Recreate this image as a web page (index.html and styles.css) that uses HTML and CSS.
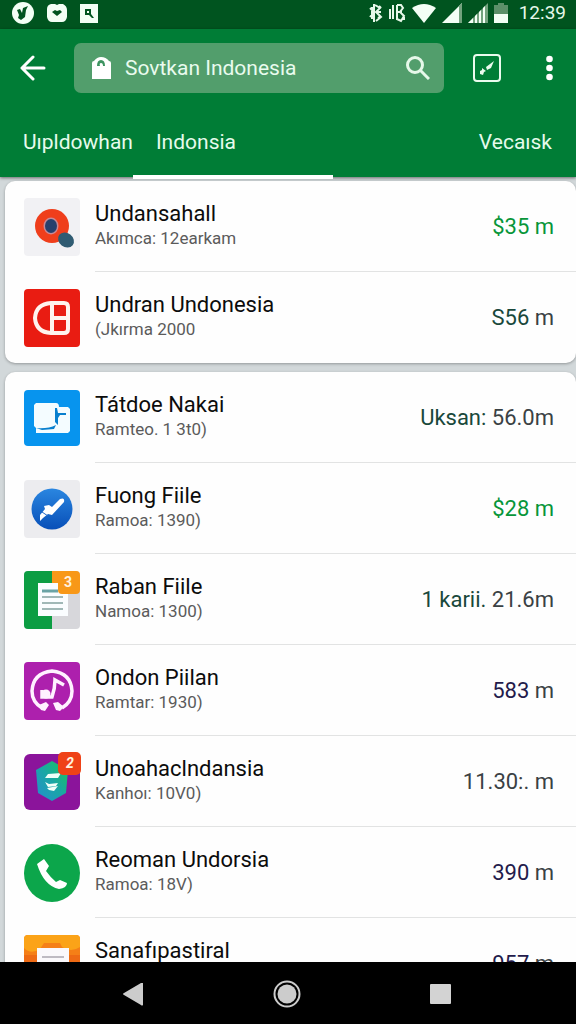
FILE: index.html
```html
<!DOCTYPE html>
<html lang="id">
<head>
  <meta charset="UTF-8" />
  <meta name="viewport" content="width=device-width, initial-scale=1.0"/>
  <title>Indonesia</title>
  <link rel="stylesheet" href="styles.css">
</head>
<body>
  <div class="status-bar">
    <div class="status-left">
      <svg width="22" height="22" viewBox="0 0 22 22"><circle cx="11" cy="11" r="11" fill="#f3fff5"/><path d="M5 8l3-1 2 4 1-5 5-2-2 4-1 7-4 3-3-2 1-3z" fill="#00541f"/></svg>
      <svg width="20" height="20" viewBox="0 0 20 20"><path d="M4 1h4l2 1 2-1h4q4 2 4 6v7q-1 5-5 5H5q-4 0-5-5V6q0-4 4-5z" fill="#f3fff5"/><path d="M5 9l3-2 2 1 3-1 2 2-5 4z" fill="#00541f"/></svg>
      <svg width="18" height="20" viewBox="0 0 18 20"><path d="M0 1h18v19H0z" fill="#f3fff5"/><path d="M5 6h6v5l3 4h-2l-3-3H5z" fill="#00541f"/><path d="M7 8h2v2H7z" fill="#f3fff5"/></svg>
    </div>
    <div class="status-right">
      <svg width="14" height="20" viewBox="0 0 14 20" fill="none" stroke="#e6f8e9" stroke-width="2"><path d="M5 1v18M1 5l4 4-4 5M6 2l5 3-4 4 5 5-5 4M3 4v12M8 9h4M10 3l2 2M9 15l3-2"/></svg>
      <svg width="17" height="20" viewBox="0 0 17 20" fill="none" stroke="#e6f8e9" stroke-width="2"><path d="M1 6v10M4 2v14M8 2v15M8 2h4l2 3-3 4 4 4-3 5-4-2M9 9h4M15 14v3"/></svg>
      <svg width="24" height="20" viewBox="0 0 24 20"><path d="M12 20L0 5q12-8 24 0z" fill="#f3fff5"/></svg>
      <svg width="20" height="20" viewBox="0 0 20 20"><path d="M20 0v20H0z" fill="#f3fff5"/><path d="M17 3l3-3v20h-3z" fill="#73a37e"/></svg>
      <svg width="20" height="20" viewBox="0 0 20 20"><path d="M20 0v20H0z" fill="#73a37e"/><path d="M5 15v5H0zM9 11v9H7v-7zM13 7v13h-2V9zM17 3v17h-2V5z" fill="#f3fff5"/></svg>
      <svg width="14" height="20" viewBox="0 0 14 20"><path d="M4 0h6v2h4v9H0V2h4z" fill="#5c9069"/><path d="M0 11h14v9H0z" fill="#f3fff5"/></svg>
      <span class="clock">12:39</span>
    </div>
  </div>

  <header class="header">
    <div class="toolbar">
      <button class="icon-btn back" aria-label="Back">
        <svg width="26" height="26" viewBox="0 0 26 26" fill="none" stroke="#fff" stroke-width="3" stroke-linecap="round" stroke-linejoin="round"><path d="M13 2L2 13l11 11M2 13h22"/></svg>
      </button>
      <div class="search">
        <label for="search" aria-label="Search">
          <svg width="19" height="22" viewBox="0 0 19 22"><path d="M0 6q0-2 2-2 3-4 7-4 5 0 8 4 2 0 2 2v16H0z" fill="#fff"/><path d="M5 9q0-6 4-6t4 6h-2q0-3-2-3T8 9z" fill="#3d9360"/></svg>
        </label>
        <input type="text" id="search" value="Sovtkan Indonesia">
        <button class="icon-btn" aria-label="Search">
          <svg width="24" height="24" viewBox="0 0 24 24" fill="none" stroke="#e6f8e9" stroke-width="3"><circle cx="9" cy="9" r="7.500"/><path d="M14 14l9 9"/></svg>
        </button>
      </div>
      <button class="icon-btn edit" aria-label="Edit">
        <svg width="28" height="28" viewBox="0 0 28 28"><rect x="1" y="1" width="26" height="26" rx="3" fill="none" stroke="#eafbee" stroke-width="2"/><path d="M21 7l-3 7-4 2-1-3zM9 14l4 3-2 1-1 3-3-1v-3l2-1z" fill="#eafbee"/></svg>
      </button>
      <button class="icon-btn more" aria-label="More">
        <svg width="7" height="26" viewBox="0 0 7 26" fill="#fff"><circle cx="3.500" cy="4" r="3.300"/><circle cx="3.500" cy="13" r="3.300"/><circle cx="3.500" cy="22" r="3.300"/></svg>
      </button>
    </div>
    <nav class="tabs">
      <a href="#" class="tab">Uıpldowhan</a>
      <a href="#" class="tab active">Indonsia</a>
      <a href="#" class="tab last">Vecaısk</a>
    </nav>
  </header>

  <main class="content">
    <ul class="card">
      <li class="row">
        <svg class="app-icon" viewBox="0 0 56 58"><rect width="56" height="58" rx="4" fill="#f1f1f4"/><circle cx="28" cy="28" r="17" fill="#ef3e1b"/><ellipse cx="27" cy="28" rx="7.500" ry="8.500" fill="#c98a96"/><ellipse cx="27" cy="28" rx="6" ry="7" fill="#27406c"/><ellipse cx="42" cy="42" rx="8.500" ry="7" transform="rotate(38 42 42)" fill="#2f5b72"/></svg>
        <div class="info"><h2>Undansahall</h2><p>Akımca: 12earkam</p></div>
        <span class="amount green">$35 m</span>
      </li>
      <li class="row">
        <svg class="app-icon" viewBox="0 0 56 58"><rect width="56" height="58" rx="4" fill="#e91c12"/><path d="M27 14h13q4 0 4 4v22q0 4-4 4H27q-15-1-16-15 1-14 16-15zM28 14v30M28 29h16" fill="none" stroke="#fff3ee" stroke-width="4"/></svg>
        <div class="info"><h2>Undran Undonesia</h2><p>(Jkırma 2000</p></div>
        <span class="amount"><span class="dark-green">S56</span> m</span>
      </li>
    </ul>

    <ul class="card">
      <li class="row">
        <svg class="app-icon" viewBox="0 0 56 58"><rect y="1" width="56" height="56" rx="4" fill="#0794ee"/><path d="M10 16l2-2h20q3 0 3 4h9l2 2v22l-2 2H12V39l-2-2z" fill="#f4fcff"/><path d="M31 19h2l1 5h8v2h-6l-2 3v7l-3-3zM12 39q12 1 20-3l-2 4-12 1z" fill="#087fce"/></svg>
        <div class="info"><h2>Tátdoe Nakai</h2><p>Ramteo. 1 3t0)</p></div>
        <span class="amount"><span class="dark-green">Uksan:</span> 56.0m</span>
      </li>
      <li class="row">
        <svg class="app-icon" viewBox="0 0 56 58"><defs><linearGradient id="blue" x2="0" y2="1"><stop stop-color="#2a86e0"/><stop offset="1" stop-color="#084fb8"/></linearGradient></defs><rect width="56" height="58" rx="4" fill="#ececef"/><circle cx="28" cy="29" r="20.500" fill="url(#blue)"/><path d="M16 35l5-6-1-3 5-1 3 2 8-8q5-2 4 3L28 35l-4-1-5 4-3 3z" fill="#fff"/><path d="M18 32l6 4" stroke="#2269c8" stroke-width="1"/></svg>
        <div class="info"><h2>Fuong Fiile</h2><p>Ramoa: 1390)</p></div>
        <span class="amount green">$28 m</span>
      </li>
      <li class="row">
        <svg class="app-icon" viewBox="0 0 56 58"><rect width="56" height="58" rx="4" fill="#d7d7db"/><path d="M4 0h24v58H4q-4 0-4-4V4q0-4 4-4z" fill="#0c9d43"/><path d="M14 12h30v33H14z" fill="#fafdff"/><path d="M28 0h24q4 0 4 4v15q0 4-4 4H38q-4 0-4-4v-7h-6z" fill="#f89818"/><path d="M18 20h16" stroke="#6aa3a5" stroke-width="3"/><path d="M18 26h21M18 32h21M18 38h21" stroke="#82a1a0" stroke-width="1.500"/><text x="40" y="16" class="badge-text">3</text></svg>
        <div class="info"><h2>Raban Fiile</h2><p>Namoa: 1300)</p></div>
        <span class="amount"><span class="dark-green">1 karii.</span> 21.6m</span>
      </li>
      <li class="row">
        <svg class="app-icon" viewBox="0 0 56 58"><rect width="56" height="58" rx="4" fill="#ad20ad"/><path d="M18 46Q8 40 8 29 9 11 28 9q19 2 20 20 0 11-10 17" fill="none" stroke="#fff1ff" stroke-width="3.500"/><path d="M15 43l7-3 3 3-4 6-4-1zM29 41l5-1 6 5-4 4-4-1z" fill="#fff1ff"/><ellipse cx="22" cy="32" rx="4.500" ry="4.500" fill="#fff1ff"/><path d="M18 28v7h10q3-9 3-17l9 5" fill="none" stroke="#fff1ff" stroke-width="3.500"/></svg>
        <div class="info"><h2>Ondon Piilan</h2><p>Ramtar: 1930)</p></div>
        <span class="amount"><span class="indigo">583</span> m</span>
      </li>
      <li class="row">
        <svg class="app-icon" viewBox="0 0 56 58"><defs><linearGradient id="teal" x1="1" x2="0" y2="1"><stop stop-color="#1bc552"/><stop offset=".5" stop-color="#19a7a5"/><stop offset="1" stop-color="#268ed0"/></linearGradient></defs><rect y="1" width="56" height="56" rx="6" fill="#8b149b"/><path d="M12 17L28 8l16 9-2 23-14 8-14-8z" fill="url(#teal)"/><path d="M21 25l3-4 13-1-3 5zM21 29l4 2 9-1-2 3-8 1zM23 35l11-2-4 5-5-1z" fill="#effff8"/><rect x="34" y="-1" width="23" height="23" rx="5" fill="#ef4217"/><text x="42" y="15" class="badge-text italic">2</text></svg>
        <div class="info"><h2>Unoahaclndansia</h2><p>Kanhoı: 10V0)</p></div>
        <span class="amount">11.30:. m</span>
      </li>
      <li class="row">
        <svg class="app-icon" viewBox="0 0 56 58"><ellipse cx="28" cy="29" rx="28" ry="29" fill="#0ca64b"/><path d="M13 20l7-5 5 7-3 5q5 7 10 11l4-2 7 3q0 5-8 6Q20 42 13 20z" fill="#fff"/></svg>
        <div class="info"><h2>Reoman Undorsia</h2><p>Ramoa: 18V)</p></div>
        <span class="amount"><span class="indigo">390</span> m</span>
      </li>
      <li class="row">
        <svg class="app-icon" viewBox="0 0 56 58"><rect width="56" height="58" rx="4" fill="#f57f17"/><path d="M4 0h48q4 0 4 4v8q-9 6-18 0l-2-4H20l-4 6Q7 20 0 13V4q0-4 4-4z" fill="#fba318"/><path d="M0 20h56v38H0z" fill="#ee6a14"/><path d="M13 13h32v45H13z" fill="#faf8fb"/><path d="M18 22h22M18 28h22" stroke="#aaa5b0" stroke-width="1.500"/></svg>
        <div class="info"><h2>Sanafıpastiral</h2><p>Ramoa: 1300)</p></div>
        <span class="amount"><span class="indigo">957</span> m</span>
      </li>
    </ul>
  </main>

  <footer class="nav-bar">
    <button class="icon-btn" aria-label="Back"><svg width="28" height="28" viewBox="0 0 28 28"><path d="M24 3v22q-1 1-2 0L5 15q-2-1 0-2L22 3z" fill="#ccc"/></svg></button>
    <button class="icon-btn" aria-label="Home"><svg width="28" height="28" viewBox="0 0 28 28"><circle cx="14" cy="14" r="12.500" fill="none" stroke="#ccc" stroke-width="2"/><circle cx="14" cy="14" r="9.500" fill="#ccc"/></svg></button>
    <button class="icon-btn" aria-label="Recent apps"><svg width="28" height="28" viewBox="0 0 28 28"><rect x="3" y="4" width="21" height="20" rx="1" fill="#d3d3d3"/></svg></button>
  </footer>
</body>
</html>
```
FILE: styles.css
```css
:root {
  --green: #007d36;
  --green-dark: #00541f;
  --bg: #d2d8da;
  --text: #0c0c0c;
  --muted: #5b5b5b;
}

* {
  box-sizing: border-box;
}

body {
  margin: 0;
  height: 100vh;
  display: flex;
  flex-direction: column;
  overflow: hidden;
  font-family: Roboto, sans-serif;
  background: var(--bg);
  color: var(--text);
}

.status-bar {
  flex: none;
  height: 29px;
  padding: 0 10px 4px 12px;
  display: flex;
  align-items: center;
  justify-content: space-between;
  background: var(--green-dark);
}

.status-left {
  display: flex;
  align-items: center;
  gap: 13px;
}

.status-right {
  display: flex;
  align-items: center;
  gap: 6px;
}

.clock {
  margin-left: 5px;
  font-size: 19px;
  line-height: 24px;
  color: #e6f8e9;
}

.header {
  flex: none;
  position: relative;
  z-index: 1;
  padding-top: 14px;
  background: var(--green);
  box-shadow: 0 1px 3px rgba(0, 0, 0, 0.5);
}

.toolbar {
  display: flex;
  align-items: center;
  padding: 0 23px 0 20px;
}

.icon-btn {
  display: flex;
  padding: 0;
  border: none;
  background: none;
  cursor: pointer;
}

.back {
  margin-right: 28px;
}

.edit {
  margin: 0 45px 0 29px;
}

.search {
  flex: 1;
  min-width: 0;
  height: 50px;
  padding: 0 14px 0 18px;
  display: flex;
  align-items: center;
  gap: 14px;
  border-radius: 7px;
  background: #529e6c;
}

.search label {
  display: flex;
}

.search input {
  flex: 1;
  min-width: 0;
  padding: 0;
  border: none;
  outline: none;
  background: none;
  font-family: inherit;
  font-size: 21px;
  line-height: 28px;
  color: #e9fbee;
}

.tabs {
  display: flex;
  height: 84px;
}

.tab {
  padding: 34px 0 0 23px;
  font-size: 21px;
  line-height: 30px;
  color: #e6fbec;
  text-decoration: none;
}

.tab.active {
  width: 200px;
  height: 86px;
  border-bottom: 4px solid #fff;
}

.tab.last {
  margin-left: auto;
  padding-right: 24px;
}

.content {
  flex: 1;
  min-height: 0;
  padding: 4px 0 0 5px;
  overflow: hidden;
}

.card {
  margin: 0 0 9px;
  padding: 0;
  list-style: none;
  background: #fefefe;
  border-radius: 10px;
  box-shadow: 0 1px 3px rgba(0, 0, 0, 0.3);
}

.row {
  position: relative;
  display: flex;
  align-items: center;
  height: 91px;
  padding: 0 22px 0 19px;
}

/* divider starts under the text, not under the icon */
.row + .row::before {
  content: "";
  position: absolute;
  top: -1px;
  left: 90px;
  right: 0;
  height: 1px;
  background: #e2e3e3;
}

.app-icon {
  flex: none;
  width: 56px;
  height: 58px;
  margin-right: 15px;
  overflow: visible;
}

.badge-text {
  font-size: 14px;
  font-weight: 700;
  fill: #fff3e0;
}

.italic {
  font-style: italic;
}

.info {
  flex: 1;
  min-width: 0;
  padding-bottom: 4px;
}

.info h2 {
  margin: 0;
  font-size: 22px;
  font-weight: 400;
  line-height: 26px;
}

.info p {
  margin: 0;
  font-size: 17px;
  line-height: 22px;
  color: var(--muted);
}

.amount {
  font-size: 22px;
  line-height: 28px;
  color: #3a4144;
}

.green {
  color: #08963a;
}

.dark-green {
  color: #19483b;
}

.indigo {
  color: #231b4b;
}

.nav-bar {
  flex: none;
  height: 62px;
  padding: 2px 121px 0 119px;
  display: flex;
  align-items: center;
  justify-content: space-between;
  background: #000;
}
```
